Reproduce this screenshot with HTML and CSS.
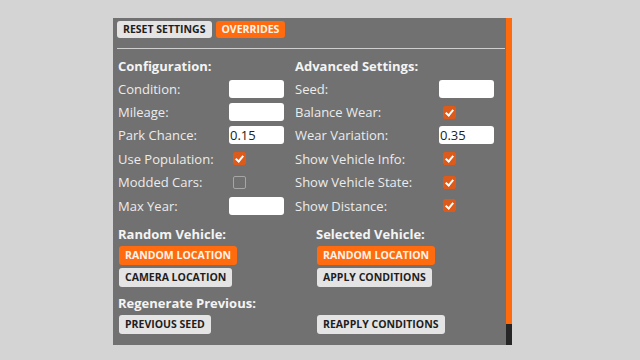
FILE: index.html
```html
<!DOCTYPE html>
<html>
<head>
    <meta charset="UTF-8">
    <title>Vehicle Overrides</title>
    <link rel="stylesheet" href="styles.css">
</head>
<body>
    <div class="window">
        <div class="panel">
            <div class="tabs">
                <button class="btn">Reset Settings</button>
                <button class="btn orange">Overrides</button>
            </div>
            <div class="divider"></div>

            <div class="settings">
                <div class="column">
                    <div class="title">Configuration:</div>
                    <div class="row"><span class="label">Condition:</span><input type="text"></div>
                    <div class="row"><span class="label">Mileage:</span><input type="text"></div>
                    <div class="row"><span class="label">Park Chance:</span><input type="text" value="0.15"></div>
                    <div class="row"><span class="label">Use Population:</span><span class="check on"></span></div>
                    <div class="row"><span class="label">Modded Cars:</span><span class="check"></span></div>
                    <div class="row"><span class="label">Max Year:</span><input type="text"></div>
                </div>
                <div class="column wide">
                    <div class="title">Advanced Settings:</div>
                    <div class="row"><span class="label">Seed:</span><input type="text"></div>
                    <div class="row"><span class="label">Balance Wear:</span><span class="check on"></span></div>
                    <div class="row"><span class="label">Wear Variation:</span><input type="text" value="0.35"></div>
                    <div class="row"><span class="label">Show Vehicle Info:</span><span class="check on"></span></div>
                    <div class="row"><span class="label">Show Vehicle State:</span><span class="check on"></span></div>
                    <div class="row"><span class="label">Show Distance:</span><span class="check on"></span></div>
                </div>
            </div>

            <div class="actions">
                <div class="group">
                    <div class="title">Random Vehicle:</div>
                    <button class="btn orange">Random Location</button>
                    <button class="btn">Camera Location</button>
                </div>
                <div class="group">
                    <div class="title">Selected Vehicle:</div>
                    <button class="btn orange">Random Location</button>
                    <button class="btn">Apply Conditions</button>
                </div>
                <div class="group">
                    <div class="title">Regenerate Previous:</div>
                    <button class="btn">Previous Seed</button>
                </div>
                <div class="group">
                    <div class="title"></div>
                    <button class="btn">Reapply Conditions</button>
                </div>
            </div>
        </div>
        <div class="scrollbar">
            <div class="thumb"></div>
        </div>
    </div>
</body>
</html>
```

FILE: styles.css
```css
body {
    margin: 0;
    background-color: #d4d4d4;
    font-family: "Open Sans", "Noto Sans", sans-serif;
    color: #f2f2f2;
}

.window {
    display: flex;
    margin: 18px 0 0 113px;
    width: 399px;
    height: 327px;
}

.panel {
    flex: 1;
    background-color: #717171;
    padding: 3px 0 0 4px;
    box-sizing: border-box;
}

.scrollbar {
    width: 6px;
    background-color: #262626;
    display: flex;
    flex-direction: column;
}

.thumb {
    height: 306px;
    background-color: #ff6a0d;
}

.tabs {
    display: flex;
    gap: 4px;
}

.btn {
    font-family: "Open Sans", "Noto Sans", sans-serif;
    font-weight: 700;
    font-size: 10.5px;
    text-transform: uppercase;
    color: #1e1e1e;
    background-color: #e4e4e4;
    border: none;
    border-radius: 3px;
    height: 19px;
    padding: 0 6px;
    line-height: 19px;
    cursor: pointer;
}

.tabs .btn {
    height: 17px;
    line-height: 17px;
}

.btn.orange {
    background-color: #ff6b0e;
    color: #fff4ea;
}

.divider {
    height: 1px;
    background-color: #cfcfcf;
    margin: 10px 1px 0 0;
}

.settings {
    display: flex;
    padding: 7px 0 0 1px;
}

.column {
    width: 177px;
}

.column.wide {
    width: 200px;
}

.title {
    font-size: 13px;
    font-weight: 700;
    color: #f4f4f4;
    height: 21px;
    line-height: 21px;
}

.row {
    display: flex;
    align-items: center;
    height: 23.4px;
}

.label {
    font-size: 13px;
    color: #ececec;
    width: 111px;
}

.wide .label {
    width: 144px;
}

input {
    width: 55px;
    height: 18px;
    box-sizing: border-box;
    border: none;
    border-radius: 3px;
    background-color: #ffffff;
    font-family: "Open Sans", "Noto Sans", sans-serif;
    font-size: 13px;
    color: #222;
    padding: 0 1px;
    outline: none;
}

.check {
    width: 13px;
    height: 13px;
    box-sizing: border-box;
    border: 1px solid #a6a6a6;
    border-radius: 2px;
    margin-left: 4px;
    position: relative;
}

.check.on {
    background-color: #dc5a1a;
    border-color: #dc5a1a;
}

.check.on::after {
    content: "";
    position: absolute;
    left: 3px;
    top: 1px;
    width: 3px;
    height: 6px;
    border: solid #fff;
    border-width: 0 2px 2px 0;
    transform: rotate(40deg);
}

.actions {
    display: grid;
    grid-template-columns: 198px 1fr;
    padding: 8px 0 0 1px;
    row-gap: 7px;
}

.group {
    display: flex;
    flex-direction: column;
    align-items: flex-start;
    gap: 3px;
}

.group .title {
    height: 19px;
    line-height: 19px;
    margin-bottom: -1px;
}

.group .btn {
    margin-left: 1px;
}
```
